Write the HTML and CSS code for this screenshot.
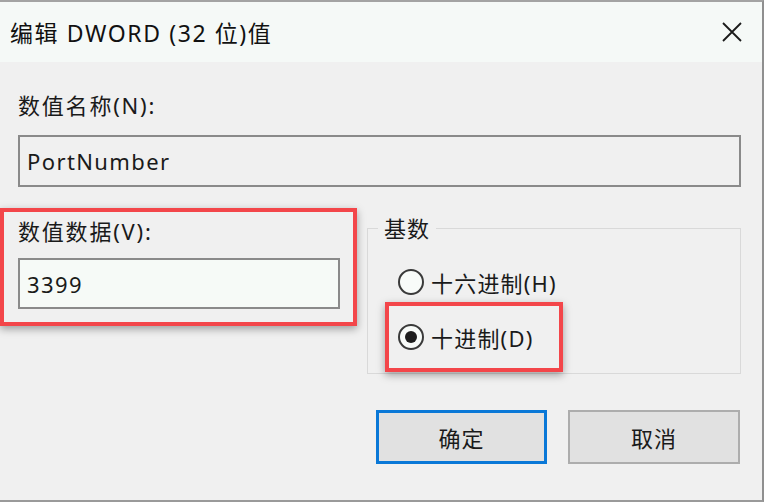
FILE: index.html
```html
<!DOCTYPE html>
<html lang="zh-CN">
<head>
<meta charset="utf-8">
<title>编辑 DWORD (32 位)值</title>
<link rel="stylesheet" href="styles.css">
</head>
<body>
<div class="window">
  <div class="titlebar">
    <div class="title">编辑 DWORD (32 位)值</div>
    <svg class="close" width="20" height="20" viewBox="0 0 20 20" aria-label="关闭">
      <path d="M1 1 L19 19 M19 1 L1 19" stroke="#1a1a1a" stroke-width="1.8" fill="none"/>
    </svg>
  </div>
  <div class="content">
    <div class="label name-label">数值名称(N):</div>
    <div class="textbox readonly">PortNumber</div>
    <div class="lower">
      <div class="highlight data-box">
        <div class="label">数值数据(V):</div>
        <div class="textbox value">3399</div>
      </div>
      <div class="group">
        <div class="legend">基数</div>
        <div class="radio-row first">
          <span class="radio"></span><span class="radio-text">十六进制(H)</span>
        </div>
        <div class="highlight radio-hl">
          <div class="radio-row">
            <span class="radio checked"></span><span class="radio-text">十进制(D)</span>
          </div>
        </div>
      </div>
    </div>
    <div class="buttons">
      <div class="btn default">确定</div>
      <div class="btn">取消</div>
    </div>
  </div>
</div>
</body>
</html>
```
FILE: styles.css
```css
html, body {
  margin: 0;
  padding: 0;
  background: #ffffff;
}
body {
  font-family: "Noto Sans", "Noto Sans CJK SC", sans-serif;
  color: #1a1a1a;
}
.window {
  width: 762px;
  height: 498px;
  border-top: 2px solid #a3a3a3;
  border-right: 2px solid #8f8f8f;
  border-bottom: 2px solid #9a9a9a;
  background: #f0f0f0;
  display: flex;
  flex-direction: column;
}
.titlebar {
  height: 60px;
  background: #f5f9f7;
  display: flex;
  align-items: center;
  justify-content: space-between;
  padding: 0 20px 0 10px;
  flex-shrink: 0;
}
.title {
  font-size: 23px;
  letter-spacing: 1.6px;
  color: #111;
}
.close {
  display: block;
}
.content {
  padding: 0 21px 0 18px;
  flex: 1;
  display: flex;
  flex-direction: column;
}
.label {
  font-size: 22px;
  line-height: 30px;
  letter-spacing: 1.8px;
  color: #1a1a1a;
}
.name-label {
  margin-top: 28px;
  height: 30px;
}
.textbox {
  box-sizing: border-box;
  border: 2px solid #8a8a8a;
  font-size: 22px;
  letter-spacing: 1.4px;
  display: flex;
  align-items: center;
  padding-left: 7px;
  color: #1a1a1a;
}
.readonly {
  margin-top: 15px;
  height: 52px;
  background: #f0f0f0;
}
.lower {
  display: flex;
  margin-left: -18px;
  margin-top: 21px;
  align-items: flex-start;
}
.highlight {
  box-sizing: border-box;
  border: 4px solid #f3464a;
  box-shadow: 0 3px 8px rgba(0, 0, 0, 0.35);
}
.data-box {
  width: 357px;
  height: 118px;
  padding: 4px 0 0 14px;
  flex-shrink: 0;
}
.value {
  margin-top: 12px;
  width: 322px;
  height: 51px;
  background: #f6faf7;
}
.group {
  box-sizing: border-box;
  margin-left: 10px;
  margin-top: 20px;
  width: 374px;
  height: 146px;
  border: 1px solid #d9d9d9;
  position: relative;
  padding: 0 0 0 17px;
}
.legend {
  position: absolute;
  top: -16px;
  left: 10px;
  padding: 0 6px;
  background: #f0f0f0;
  font-size: 22px;
  line-height: 30px;
  letter-spacing: 1px;
}
.radio-row {
  display: flex;
  align-items: center;
  height: 30px;
}
.radio-row.first {
  margin-top: 38px;
  margin-left: 13px;
}
.radio {
  box-sizing: border-box;
  width: 26px;
  height: 26px;
  border: 2px solid #3a3a3a;
  border-radius: 50%;
  background: #f8fbf9;
  display: flex;
  align-items: center;
  justify-content: center;
  flex-shrink: 0;
}
.radio.checked::after {
  content: "";
  width: 12px;
  height: 12px;
  border-radius: 50%;
  background: #1e1e1e;
}
.radio-text {
  margin-left: 7px;
  font-size: 22px;
  letter-spacing: 1.2px;
}
.radio-hl {
  margin-top: 5px;
  width: 178px;
  height: 70px;
  padding: 16px 0 0 9px;
}
.buttons {
  display: flex;
  justify-content: flex-end;
  gap: 21px;
  margin-top: 36px;
  margin-right: 1px;
}
.btn {
  box-sizing: border-box;
  width: 172px;
  height: 54px;
  background: #e1e1e1;
  border: 2px solid #adadad;
  display: flex;
  align-items: center;
  justify-content: center;
  font-size: 22px;
  letter-spacing: 1px;
}
.btn.default {
  width: 171px;
  border: 3px solid #0a78d7;
}
```
